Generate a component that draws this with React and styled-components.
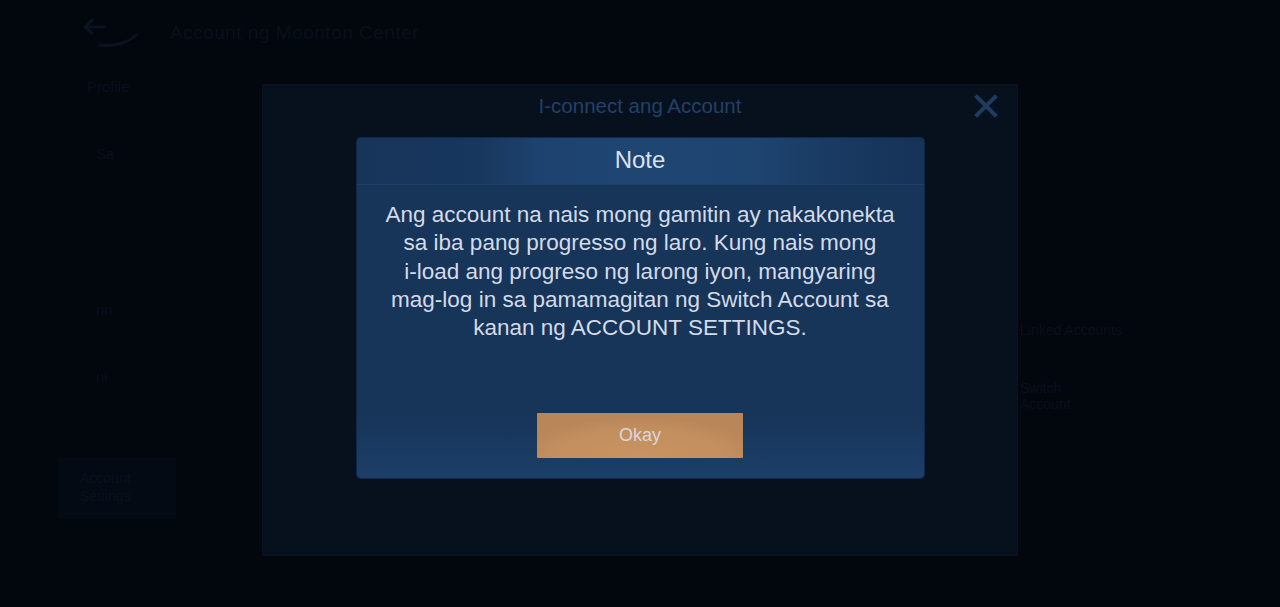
import styled, { createGlobalStyle } from "styled-components";

const GlobalStyle = createGlobalStyle`
    html, body {
        margin: 0;
        padding: 0;
        background: #02060d;
    }

    body {
        font-family: "Liberation Sans", Arial, sans-serif;
        overflow: hidden;
    }
`;

const NOTE_LINES = [
    "Ang account na nais mong gamitin ay nakakonekta",
    "sa iba pang progresso ng laro. Kung nais mong",
    "i-load ang progreso ng larong iyon, mangyaring",
    "mag-log in sa pamamagitan ng Switch Account sa",
    "kanan ng ACCOUNT SETTINGS.",
];

function BackIcon() {
    return (
        <svg width="58" height="32" viewBox="0 0 58 32" fill="none">
            <path d="M4 10 L22 10" stroke="#0a1321" strokeWidth="3" strokeLinecap="round" />
            <path d="M10 3 L3 10 L10 16" stroke="#0a1321" strokeWidth="3" strokeLinecap="round" />
            <path d="M18 28 C32 30 46 26 54 18" stroke="#0a1321" strokeWidth="3" strokeLinecap="round" />
        </svg>
    );
}

function CloseIcon() {
    return (
        <svg width="24" height="24" viewBox="0 0 24 24">
            <path d="M3 3 L21 21 M21 3 L3 21" stroke="#1f3b60" strokeWidth="4" strokeLinecap="square" />
        </svg>
    );
}

function App() {
    return (
        <>
            <GlobalStyle />
            <Screen>
                <TopBar>
                    <BackIcon />
                    <PageTitle>Account ng Moonton Center</PageTitle>
                </TopBar>
                <Content>
                    <Sidebar>
                        <SideItem>Profile</SideItem>
                        <SideItem $indent>Sa</SideItem>
                        <SideItem $indent $top={89}>nn</SideItem>
                        <SideItem $indent>ni</SideItem>
                        <SideBox>Account Settings</SideBox>
                    </Sidebar>
                    <Main />
                    <RightColumn>
                        <FaintText $width={110}>Linked Accounts</FaintText>
                        <FaintText $width={90}>Switch Account</FaintText>
                    </RightColumn>
                </Content>
            </Screen>

            <Overlay $top={84}>
                <ConnectPanel>
                    <PanelHeader>
                        <PanelTitle>I-connect ang Account</PanelTitle>
                        <CloseButton aria-label="close">
                            <CloseIcon />
                        </CloseButton>
                    </PanelHeader>
                </ConnectPanel>
            </Overlay>

            <Overlay $top={138}>
                <NoteDialog>
                    <NoteHeader>Note</NoteHeader>
                    <NoteBody>
                        <NoteText>
                            {NOTE_LINES.map((line) => (
                                <span key={line}>{line}</span>
                            ))}
                        </NoteText>
                        <OkayButton>Okay</OkayButton>
                    </NoteBody>
                </NoteDialog>
            </Overlay>
        </>
    );
}

export default App;

const Screen = styled.div`
    width: 1280px;
    height: 607px;
    display: flex;
    flex-direction: column;
    color: #08101c;
`;

const TopBar = styled.header`
    display: flex;
    align-items: center;
    gap: 30px;
    height: 62px;
    padding: 4px 0 0 82px;
    box-sizing: border-box;
`;

const PageTitle = styled.h1`
    margin: 0;
    font-size: 19px;
    font-weight: normal;
    color: #08101c;
    letter-spacing: 0.5px;
`;

const Content = styled.div`
    flex: 1;
    display: grid;
    grid-template-columns: 240px 1fr 260px;
`;

const Sidebar = styled.nav`
    display: flex;
    flex-direction: column;
    align-items: flex-start;
    padding: 16px 0 0 58px;
`;

const SideItem = styled.div`
    margin-top: ${(p) => (p.$top ? `${p.$top}px` : "0")};
    margin-bottom: 50px;
    padding-left: ${(p) => (p.$indent ? "38px" : "29px")};
    font-size: 15px;
    color: #08101c;
`;

const SideBox = styled.div`
    margin-top: 23px;
    width: 118px;
    height: 61px;
    padding: 11px 22px;
    box-sizing: border-box;
    background: #040a13;
    font-size: 14px;
    line-height: 18px;
    color: #09111e;
`;

const Main = styled.main``;

const RightColumn = styled.aside`
    display: flex;
    flex-direction: column;
    gap: 42px;
    padding: 260px 0 0 0;
`;

const FaintText = styled.div`
    font-size: 14px;
    line-height: 16px;
    color: #08101c;
    width: ${(p) => p.$width}px;
`;

const Overlay = styled.div`
    position: fixed;
    inset: 0;
    display: flex;
    justify-content: center;
    align-items: flex-start;
    padding-top: ${(p) => p.$top}px;
    box-sizing: border-box;
`;

const ConnectPanel = styled.section`
    width: 756px;
    height: 472px;
    background: #07111d;
    box-shadow: inset 0 0 0 1px #09131f;
`;

const PanelHeader = styled.div`
    position: relative;
    height: 44px;
    display: flex;
    align-items: center;
    justify-content: center;
`;

const PanelTitle = styled.h2`
    margin: 0;
    font-size: 20.5px;
    font-weight: normal;
    color: #22406a;
`;

const CloseButton = styled.button`
    position: absolute;
    right: 20px;
    top: 10px;
    padding: 0;
    border: 0;
    background: none;
    display: flex;
`;

const NoteDialog = styled.section`
    width: 567px;
    height: 340px;
    display: flex;
    flex-direction: column;
    border-radius: 4px;
    overflow: hidden;
    background: linear-gradient(180deg, #173459 0%, #173459 82%, #1c3f68 100%);
    box-shadow: 0 0 0 1px #12284a;
`;

const NoteHeader = styled.h3`
    margin: 0;
    height: 47px;
    padding-bottom: 3px;
    display: flex;
    align-items: center;
    justify-content: center;
    font-size: 24px;
    font-weight: normal;
    color: #dbe2ee;
    background: linear-gradient(
        90deg,
        #17345a 0%,
        #18375e 22%,
        #1d426f 32%,
        #1f4672 50%,
        #1e4470 70%,
        #193a62 84%,
        #163257 100%
    );
    border-bottom: 1px solid #1d3f68;
    box-sizing: border-box;
`;

const NoteBody = styled.div`
    flex: 1;
    display: flex;
    flex-direction: column;
    align-items: center;
    padding: 16px 0 20px;
`;

const NoteText = styled.p`
    margin: 0;
    display: flex;
    flex-direction: column;
    align-items: center;
    font-size: 22.5px;
    line-height: 28.3px;
    color: #d3dbe8;
    white-space: nowrap;
`;

const OkayButton = styled.button`
    margin-top: auto;
    width: 206px;
    height: 45px;
    border: 0;
    border-radius: 1px;
    background: radial-gradient(ellipse 60% 90% at 50% 100%, #c7935f 0%, #c38f5f 70%, #b9865a 100%);
    font-family: "Liberation Sans", Arial, sans-serif;
    font-size: 18px;
    color: #dcd6dc;
`;
